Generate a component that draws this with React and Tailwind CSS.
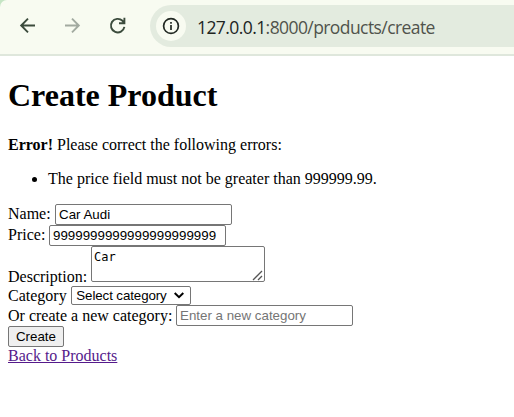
function Field({ label, labelWidth, children, className = '', labelClass = '' }) {
  return (
    <div className={`flex ${className}`}>
      <label className={`shrink-0 whitespace-nowrap leading-[18px] ${labelWidth} ${labelClass}`}>{label}</label>
      {children}
    </div>
  );
}

const inputClass =
  "h-[21px] w-[177px] rounded-[2px] border border-[#767676] bg-white px-[3px] py-0 font-['Liberation_Sans',Arial,sans-serif] text-[13.333px] leading-[19px] text-black outline-none placeholder:text-[#757575]";

function Toolbar() {
  return (
    <header className="h-[56px] w-full overflow-hidden border-b-2 border-[#dfe7dc] bg-[#c5e5c4]">
      <div className="flex h-[54px] items-start rounded-tl-[7px] bg-[#f8fbf1] pt-[5px]">
        <div className="ml-[18px] flex h-[42px] items-center">
          <svg width="20" height="20" viewBox="0 0 20 20" fill="none" stroke="#3b4b3c" strokeWidth="1.9">
            <path d="M17 9.5H3.5M10 2.7L3.2 9.5L10 16.3" />
          </svg>
          <svg className="ml-[25px]" width="20" height="20" viewBox="0 0 20 20" fill="none" stroke="#a2aaa0" strokeWidth="1.9">
            <path d="M2 9.5H15.5M9 2.7L15.8 9.5L9 16.3" />
          </svg>
          <svg className="ml-[25px]" width="20" height="20" viewBox="0 0 20 20" fill="none" stroke="#3b4b3c" strokeWidth="1.9">
            <path d="M16.4 10.9A6.8 6.8 0 1 1 14.5 4.8L16.2 6.8M16.4 1.8V7.2H11" />
          </svg>
        </div>
        <div className="ml-[22px] flex h-[42px] flex-1 items-center rounded-l-full bg-[#e3ebdf]">
          <div className="ml-[6px] flex size-[30px] items-center justify-center rounded-full bg-[#f8fbf1]">
            <svg width="18" height="18" viewBox="0 0 18 18" fill="none" stroke="#222923" strokeWidth="1.7">
              <circle cx="9" cy="9" r="7.4" />
              <path d="M9 8V13M9 5V6.8" />
            </svg>
          </div>
          <span className="ml-[11px] whitespace-nowrap pt-[1px] font-['Open_Sans','Noto_Sans',sans-serif] text-[17.5px] tracking-[-0.58px] text-[#50534c]">
            <span className="text-[#20241f]">127.0.0.1</span>:8000/products/create
          </span>
        </div>
      </div>
    </header>
  );
}

export default function App() {
  return (
    <div className="h-[417px] w-[514px] overflow-hidden bg-white font-['Liberation_Serif','Times_New_Roman',serif] text-[16px] leading-[18px] text-black">
      <Toolbar />
      <main className="px-[8px] pt-[21px]">
        <h1 className="text-[32px] leading-[37px] font-bold">Create Product</h1>
        <p className="mt-[22px]">
          <strong>Error!</strong> Please correct the following errors:
        </p>
        <ul className="mt-[16px] list-disc pl-[40px]">
          <li>The price field must not be greater than 999999.99.</li>
        </ul>
        <form className="mt-[16px]" onSubmit={(e) => e.preventDefault()}>
          <Field label="Name:" labelWidth="w-[47px]" labelClass="mt-px" className="h-[21px] items-start">
            <input className={inputClass} defaultValue="Car Audi" />
          </Field>
          <Field label="Price:" labelWidth="w-[41px]" labelClass="mt-px" className="h-[21px] items-start">
            <input className={inputClass} defaultValue="9999999999999999999999" />
          </Field>
          <Field label="Description:" labelWidth="w-[83px]" labelClass="mt-[22px]" className="h-[40px] items-start">
            <div className="relative h-[36px] w-[174px]">
              <textarea
                className="block h-[36px] w-[174px] resize-none overflow-hidden rounded-[2px] border border-[#767676] bg-white px-[2px] py-[3px] font-['DejaVu_Sans_Mono',monospace] text-[12px] leading-[15px] outline-none"
                defaultValue="Car"
              />
              <svg className="absolute right-[2px] bottom-[1px]" width="11" height="11" viewBox="0 0 11 11" stroke="#555" strokeWidth="1.3">
                <path d="M1 10L10 1M6 10L10 6" />
              </svg>
            </div>
          </Field>
          <Field label="Category" labelWidth="w-[63px]" className="h-[19px] items-center">
            <button
              type="button"
              className="flex h-[19px] w-[120px] items-center rounded-[2px] border border-[#767676] bg-white pl-[4px] font-['Liberation_Sans',Arial,sans-serif] text-[13.333px] leading-[17px]"
            >
              <span className="w-[91px] whitespace-nowrap tracking-[-0.1px]">Select category</span>
              <svg className="ml-[7px] shrink-0" width="10" height="7" viewBox="0 0 10 7" fill="none" stroke="black" strokeWidth="2">
                <path d="M0.7 1L5 5.2L9.3 1" />
              </svg>
            </button>
          </Field>
          <Field label="Or create a new category:" labelWidth="w-[168px]" className="h-[21px] items-center">
            <input className={inputClass} placeholder="Enter a new category" />
          </Field>
          <button
            type="submit"
            className="block h-[21px] w-[56px] rounded-[2px] border border-[#767676] bg-[#efefef] text-center font-['Liberation_Sans',Arial,sans-serif] text-[13.333px] leading-[19px]"
          >
            Create
          </button>
        </form>
        <a href="#" className="block w-fit text-[#551a8b] underline">
          Back to Products
        </a>
      </main>
    </div>
  );
}
